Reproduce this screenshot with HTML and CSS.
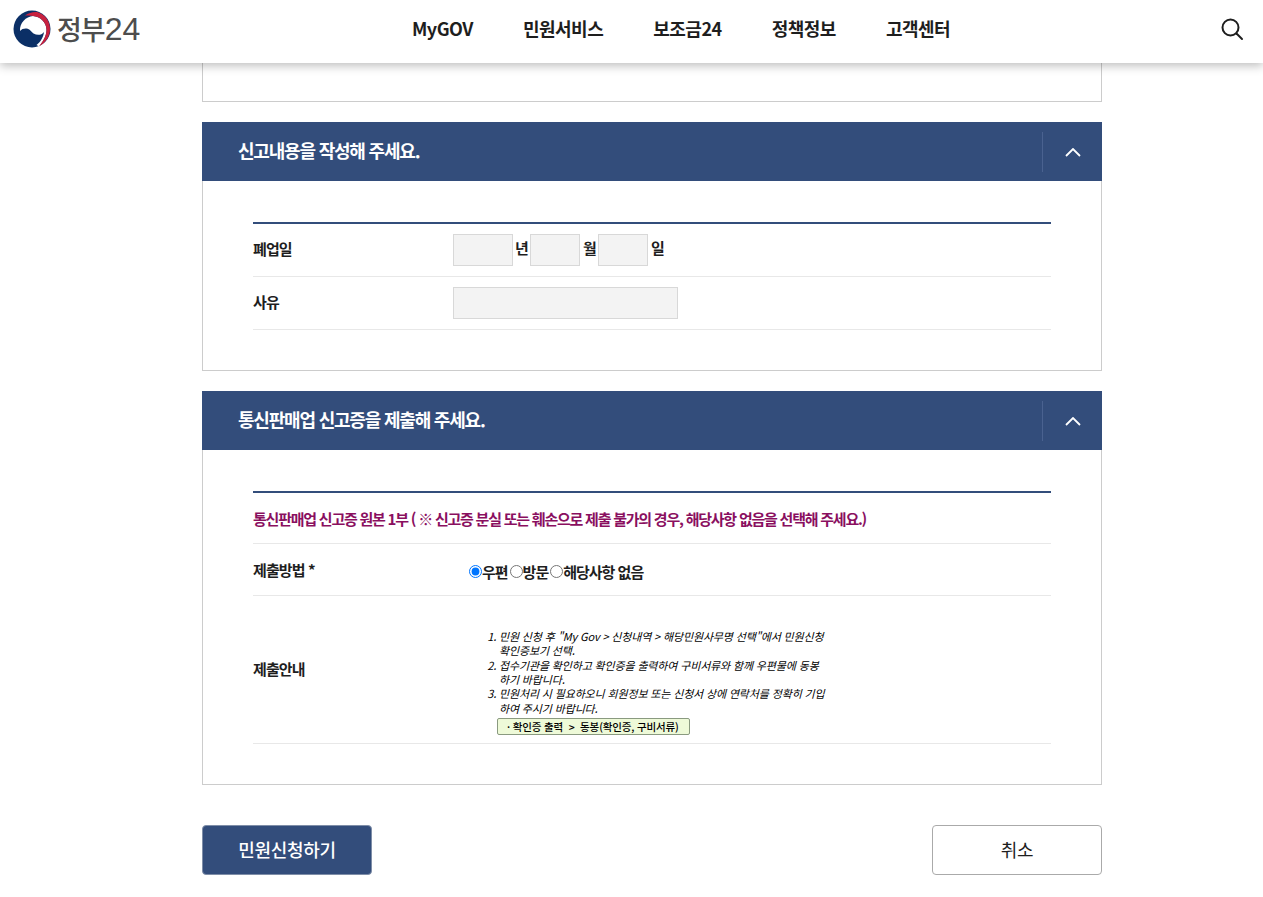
FILE: index.html
```html
<!doctype html>
<html lang="ko">
<head>
	<title>정부24</title>
	<meta charset="utf-8" />
	<link rel="stylesheet" href="styles.css">
</head>
<body>
	<header class="top">
		<a class="logo" href="#">
			<svg class="logo-mark" width="38" height="38" viewBox="0 0 38 38">
				<circle cx="19" cy="19" r="18.500" fill="#0b2f66"/>
				<path d="M7 21C6.500 13 13 6.500 20 6C27 6.500 33.500 12 33.500 20C33.500 26 30 32 26 36.500L23.500 35C27.500 32 30.500 27 31 22C28.500 25.500 24 25.500 20.500 23.500C18 21.500 17 19 13.500 18.500C11 18.300 8.500 19 7 21Z" fill="#fff"/>
				<path d="M12 5.500C15.500 3 20 1.500 24 2C32 4 37 11 37 19C37 27 32 33 26 36.500C30 31 33.500 26 33.500 20C33.500 12 27 6.500 20 6C17 5.800 14.500 5.500 12 5.500Z" fill="#c8213f"/>
			</svg>
			<span class="logo-text"><span class="logo-ko">정부</span>24</span>
		</a>
		<nav class="gnb">
			<a href="#">MyGOV</a>
			<a href="#">민원서비스</a>
			<a href="#">보조금24</a>
			<a href="#">정책정보</a>
			<a href="#">고객센터</a>
		</nav>
		<button class="search" aria-label="검색">
			<svg width="24" height="24" viewBox="0 0 24 24" fill="none" stroke="#1e1e1e" stroke-width="2">
				<circle cx="10.500" cy="10.500" r="8"/>
				<path d="M16.500 16.500L22 22" stroke-linecap="round"/>
			</svg>
		</button>
	</header>

	<main class="wrap">
		<div class="panel-end"></div>

		<section class="sect">
			<div class="sect-head">
				<h2>신고내용을 작성해 주세요.</h2>
				<button class="fold" aria-label="접기">
					<svg width="16" height="9" viewBox="0 0 16 9" fill="none" stroke="#fff" stroke-width="1.800"><path d="M1 8L8 1L15 8"/></svg>
				</button>
			</div>
			<div class="sect-body">
				<div class="form">
					<div class="row">
						<div class="label">폐업일</div>
						<div class="field date">
							<input class="input w60" type="text"><span>년</span>
							<input class="input w50" type="text"><span>월</span>
							<input class="input w50" type="text"><span>일</span>
						</div>
					</div>
					<div class="row">
						<div class="label">사유</div>
						<div class="field"><input class="input w225" type="text"></div>
					</div>
				</div>
			</div>
		</section>

		<section class="sect">
			<div class="sect-head">
				<h2>통신판매업 신고증을 제출해 주세요.</h2>
				<button class="fold" aria-label="접기">
					<svg width="16" height="9" viewBox="0 0 16 9" fill="none" stroke="#fff" stroke-width="1.800"><path d="M1 8L8 1L15 8"/></svg>
				</button>
			</div>
			<div class="sect-body">
				<div class="form">
					<div class="notice">통신판매업 신고증 원본 1부 ( ※ 신고증 분실 또는 훼손으로 제출 불가의 경우, 해당사항 없음을 선택해 주세요.)</div>
					<div class="row method-row">
						<div class="label">제출방법 *</div>
						<div class="field radios">
							<label><input type="radio" name="how" checked>우편</label>
							<label><input type="radio" name="how">방문</label>
							<label><input type="radio" name="how">해당사항 없음</label>
						</div>
					</div>
					<div class="row guide-row">
						<div class="label">제출안내</div>
						<div class="guide">
							<ol>
								<li>민원 신청 후 "My Gov &gt; 신청내역 &gt; 해당민원사무명 선택"에서 민원신청<br>확인증보기 선택.</li>
								<li>접수기관을 확인하고 확인증을 출력하여 구비서류와 함께 우편물에 동봉<br>하기 바랍니다.</li>
								<li>민원처리 시 필요하오니 회원정보 또는 신청서 상에 연락처를 정확히 기입<br>하여 주시기 바랍니다.</li>
							</ol>
							<div class="guide-box">· 확인증 출력 &nbsp;&gt;&nbsp; 동봉(확인증, 구비서류)</div>
						</div>
					</div>
				</div>
			</div>
		</section>

		<div class="actions">
			<button class="btn primary">민원신청하기</button>
			<button class="btn">취소</button>
		</div>
	</main>
</body>
</html>
```

FILE: styles.css
```css
html, body {
	margin: 0;
	background-color: #fff;
	color: #1e1e1e;
	font-family: "Noto Sans CJK KR", "Noto Sans", sans-serif;
}
a {
	color: inherit;
	text-decoration: none;
}
button {
	font-family: inherit;
	cursor: pointer;
}

/* header */
.top {
	position: relative;
	z-index: 2;
	box-sizing: border-box;
	display: flex;
	align-items: center;
	height: 63px;
	padding-bottom: 5px;
	background-color: #fff;
	box-shadow: 0 3px 9px rgba(0, 0, 0, .25);
}
.logo {
	display: flex;
	align-items: center;
	gap: 6px;
	width: 199px;
	margin-left: 13px;
}
.logo-text {
	color: #4d4d4d;
	font-family: "Liberation Sans", sans-serif;
	font-size: 32px;
	letter-spacing: 0;
	line-height: 1;
}
.logo-ko {
	font-family: "Noto Sans CJK KR", sans-serif;
	font-size: 27px;
	font-weight: 500;
	letter-spacing: -1px;
}
.gnb {
	display: flex;
	gap: 50px;
	margin-left: 200px;
	margin-bottom: 3px;
	font-size: 18px;
	font-weight: 700;
	letter-spacing: -.5px;
}
.search {
	height: 24px;
	margin-left: auto;
	margin-right: 19px;
	padding: 0;
	border: 0;
	background: none;
}

/* content */
.wrap {
	width: 900px;
	margin-left: 202px;
	padding-bottom: 22px;
}
.panel-end {
	height: 38px;
	border: 1px solid #ccc;
	border-top: 0;
}
.sect {
	margin-top: 20px;
}
.sect-head {
	display: flex;
	align-items: center;
	height: 59px;
	background-color: #334d7b;
	color: #fff;
}
.sect-head h2 {
	flex: 1;
	margin: 0 0 3px 36px;
	font-size: 18px;
	font-weight: 700;
	letter-spacing: -1.2px;
}
.fold {
	display: flex;
	align-items: center;
	justify-content: center;
	width: 60px;
	height: 40px;
	padding: 2px 0 0;
	border: 0;
	border-left: 1px solid #4a6290;
	background: none;
}
.sect-body {
	padding: 41px 50px 40px;
	border: 1px solid #ccc;
	border-top: 0;
}
.form {
	border-top: 2px solid #334d7b;
}
.row {
	display: flex;
	align-items: center;
	min-height: 52px;
	border-bottom: 1px solid #e8e8e8;
}
.label {
	width: 200px;
	padding-bottom: 3px;
	font-size: 15px;
	font-weight: 700;
	letter-spacing: -.9px;
}
.field {
	display: flex;
	align-items: center;
	font-size: 15px;
	font-weight: 700;
	letter-spacing: -.8px;
}
.date span {
	width: 15px;
	margin: 0 0 6px 2px;
}
.input {
	box-sizing: border-box;
	height: 32px;
	margin: 0;
	padding: 0;
	border: 1px solid #d8d8d8;
	background-color: #f3f3f3;
}
.w50 {
	width: 50px;
}
.w60 {
	width: 60px;
}
.w225 {
	width: 225px;
}
.date .w50 + span {
	margin-left: 3px;
}
.notice {
	height: 50px;
	line-height: 52px;
	border-bottom: 1px solid #e8e8e8;
	color: #8a0f5f;
	font-size: 15px;
	font-weight: 700;
	letter-spacing: -1.23px;
	white-space: nowrap;
}
.method-row {
	min-height: 51px;
}
.method-row .label {
	padding-bottom: 1px;
}
.radios {
	gap: 2px;
	margin-left: 16px;
	padding-top: 4px;
	letter-spacing: -1px;
}
.radios label {
	display: flex;
	align-items: center;
}
.radios input {
	width: 13px;
	height: 13px;
	margin: 0;
}
.guide-row {
	min-height: 147px;
}
.guide {
	width: 360px;
	margin-left: 34px;
	padding-top: 25px;
	color: #000;
	font-size: 11px;
	font-style: italic;
	line-height: 14.400px;
	letter-spacing: -.15px;
}
.guide ol {
	margin: 0;
	padding-left: 12px;
}
.guide-box {
	box-sizing: border-box;
	width: 193px;
	height: 17px;
	margin: 3px 0 0 10px;
	padding-left: 9px;
	border: 1px solid #8a9a80;
	border-radius: 2px;
	background-color: #eefad8;
	font-size: 10.500px;
	font-style: normal;
	font-weight: 500;
	line-height: 15px;
}

/* buttons */
.actions {
	display: flex;
	justify-content: space-between;
	margin-top: 40px;
}
.btn {
	width: 170px;
	height: 50px;
	padding: 0 0 3px;
	border: 1px solid #aaa;
	border-radius: 4px;
	background-color: #fff;
	color: #1e1e1e;
	font-size: 18px;
	letter-spacing: -.3px;
}
.primary {
	border-color: #7f8ea8;
	background-color: #334d7b;
	color: #fff;
	font-weight: 500;
}
```
